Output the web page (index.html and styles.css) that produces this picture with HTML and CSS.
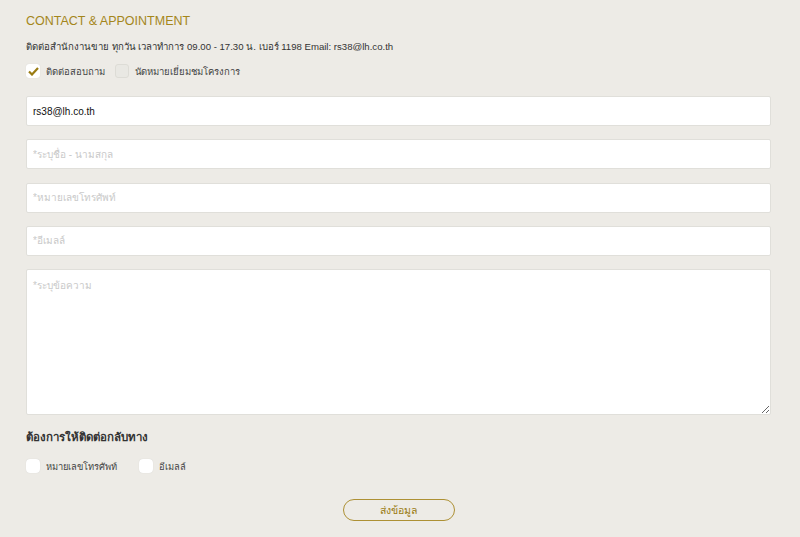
FILE: index.html
```html
<!DOCTYPE html>
<html lang="th">
<head>
    <meta charset="UTF-8">
    <meta name="viewport" content="width=device-width, initial-scale=1.0">
    <title>Contact &amp; Appointment</title>
    <link rel="stylesheet" href="styles.css">
</head>
<body>
    <div class="container">
        <h1>CONTACT &amp; APPOINTMENT</h1>
        <p class="info">ติดต่อสำนักงานขาย ทุกวัน เวลาทำการ 09.00 - 17.30 น. เบอร์ 1198 Email: rs38@lh.co.th</p>

        <div class="options">
            <label class="check">
                <span class="box checked">
                    <svg width="11" height="9" viewBox="0 0 11 9"><path d="M1 4.5 L4 7.5 L10 1" fill="none" stroke="#9a7b12" stroke-width="2.2"/></svg>
                </span>
                ติดต่อสอบถาม
            </label>
            <label class="check">
                <span class="box disabled"></span>
                นัดหมายเยี่ยมชมโครงการ
            </label>
        </div>

        <form class="form">
            <input type="text" value="rs38@lh.co.th">
            <input type="text" placeholder="*ระบุชื่อ - นามสกุล">
            <input type="text" placeholder="*หมายเลขโทรศัพท์">
            <input type="text" placeholder="*อีเมลล์">
            <textarea placeholder="*ระบุข้อความ"></textarea>

            <h2>ต้องการให้ติดต่อกลับทาง</h2>
            <div class="options back">
                <label class="check">
                    <span class="box"></span>
                    หมายเลขโทรศัพท์
                </label>
                <label class="check">
                    <span class="box"></span>
                    อีเมลล์
                </label>
            </div>

            <div class="submit">
                <button type="button">ส่งข้อมูล</button>
            </div>
        </form>
    </div>
</body>
</html>
```

FILE: styles.css
```css
* {
    margin: 0;
    padding: 0;
    box-sizing: border-box;
    font-family: 'Liberation Sans', 'Noto Sans', 'DejaVu Sans', sans-serif;
}

body {
    background: #edebe6;
    width: 800px;
    height: 537px;
    overflow: hidden;
}

.container {
    padding: 12px 28px 0 26px;
}

h1 {
    color: #a4861b;
    font-size: 12.5px;
    font-weight: normal;
    line-height: 18px;
    margin-bottom: 10px;
}

.info {
    font-size: 9.6px;
    color: #333;
    line-height: 13px;
    margin-bottom: 8px;
}

.options {
    display: flex;
    gap: 10px;
    align-items: center;
    height: 20px;
}

.check {
    display: flex;
    align-items: center;
    gap: 6px;
    font-size: 9.5px;
    color: #444;
}

.box {
    width: 14px;
    height: 14px;
    border-radius: 3px;
    background: white;
    display: flex;
    align-items: center;
    justify-content: center;
    box-shadow: 0 0 1px rgba(0, 0, 0, 0.15);
}

.box.disabled {
    background: #e9e8e3;
    border: 1px solid #dddcd6;
    box-shadow: none;
}

.form {
    margin-top: 15px;
    display: flex;
    flex-direction: column;
}

input,
textarea {
    width: 745px;
    height: 30px;
    background: white;
    border: 1px solid #e0dfda;
    border-radius: 2px;
    padding: 0 6px;
    font-size: 10px;
    color: #111;
    margin-bottom: 13.3px;
    outline: none;
}

input::placeholder,
textarea::placeholder {
    color: #c9c9c9;
}

textarea {
    height: 146px;
    padding: 8px 6px;
    resize: vertical;
    margin-bottom: 0;
}

h2 {
    font-size: 11.5px;
    color: #333;
    font-weight: bold;
    margin-top: 14px;
    line-height: 16px;
}

.back {
    margin-top: 13px;
    gap: 22px;
    height: 16px;
}

.back .check {
    font-size: 9.3px;
}

.back .box {
    border-radius: 4px;
}

.submit {
    display: flex;
    justify-content: center;
    margin-top: 25px;
    padding-right: 1px;
}

button {
    width: 112px;
    height: 22px;
    border: 1.5px solid #ad9034;
    border-radius: 11px;
    background: transparent;
    color: #9a7b12;
    font-size: 10.5px;
    cursor: pointer;
}
```
